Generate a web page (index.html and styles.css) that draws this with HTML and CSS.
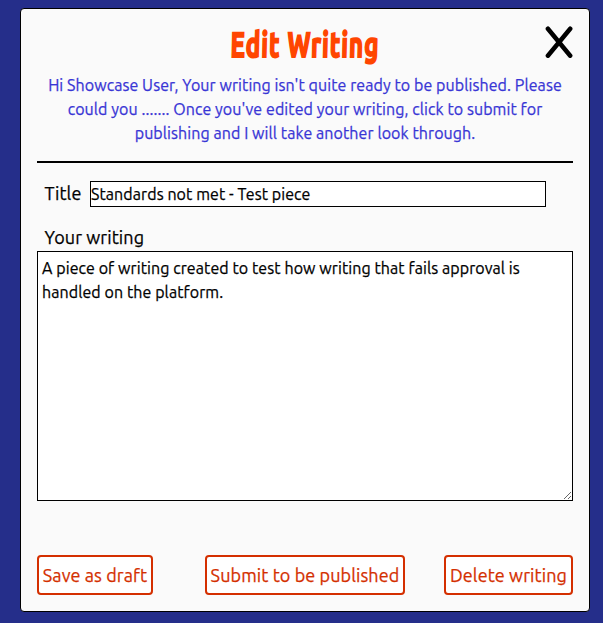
FILE: index.html
```html
<!DOCTYPE html>
<html lang="en">
<head>
<meta charset="utf-8">
<title>Edit Writing</title>
<link rel="stylesheet" href="styles.css">
</head>
<body>
<main class="dialog">
  <header class="header">
    <h1 class="heading"><span class="heading-text">Edit Writing</span></h1>
    <button type="button" class="close" aria-label="Close"><svg width="28" height="32" viewBox="0 0 28 32"><path d="M2.9 2.7 25.2 29.7M25.2 2.7 2.9 29.7"/></svg></button>
    <p class="message">Hi Showcase User, Your writing isn't quite ready to be published. Please<br>could you ....... Once you've edited your writing, click to submit for<br>publishing and I will take another look through.</p>
  </header>
  <form>
    <div class="title-row">
      <label class="label" for="title">Title</label>
      <input class="title-input" id="title" value="Standards not met - Test piece">
    </div>
    <label class="label writing-label" for="writing">Your writing</label>
    <textarea class="writing" id="writing" spellcheck="false">A piece of writing created to test how writing that fails approval is
handled on the platform.</textarea>
    <div class="actions">
      <button type="button" class="btn save">Save as draft</button>
      <button type="button" class="btn submit">Submit to be published</button>
      <button type="button" class="btn delete">Delete writing</button>
    </div>
  </form>
</main>
</body>
</html>
```
FILE: styles.css
```css
* { box-sizing: border-box; }
body {
  margin: 0;
  padding: 8px 13px 0 20px;
  height: 623px;
  overflow: hidden;
  background: #252e8a;
  font: 16px/24px Ubuntu, "Noto Sans", sans-serif;
  letter-spacing: .08px;
  color: #000;
  -webkit-text-stroke: .25px;
}
.dialog {
  width: 570px;
  height: 604px;
  padding: 16px;
  border: 1px solid #000;
  border-radius: 4px;
  background: #fafafa;
}
.header {
  position: relative;
  height: 138px;
  border-bottom: 2px solid #000;
  text-align: center;
}
.heading {
  margin: 0;
  height: 48px;
  font: 700 35px/39px Ubuntu, "Open Sans", sans-serif;
  letter-spacing: 1.6px;
  color: #ff4500;
  -webkit-text-stroke: 2px #ff4500;
}
.heading-text { display: inline-block; transform: scaleX(.69) skewX(-2deg); }
.close {
  position: absolute;
  top: 1px;
  right: 0;
  padding: 0;
  border: 0;
  background: none;
}
.close svg { display: block; fill: none; stroke: #000; stroke-width: 4.5; stroke-linecap: round; }
.message { margin: 0; color: #3835d5; white-space: nowrap; }
.title-row { display: flex; height: 26px; margin-top: 18px; }
.label { display: block; padding-left: 7.5px; font-size: 18px; }
.title-row .label { width: 53px; flex: none; }
.title-input {
  width: 456px;
  height: 26px;
  padding: 0;
  border: 1px solid #000;
  border-radius: 0;
  background: #fff;
  font: inherit;
  letter-spacing: inherit;
}
.writing-label { margin-top: 18px; height: 26px; line-height: 25px; }
.writing {
  display: block;
  width: 536px;
  height: 250px;
  padding: 4px;
  border: 1px solid #000;
  border-radius: 0;
  background: #fff;
  font: inherit;
  letter-spacing: inherit;
  resize: both;
}
.actions { display: flex; margin-top: 54px; }
.btn {
  height: 40px;
  padding: 0;
  border: 2px solid #d42f00;
  border-radius: 4px;
  background: #fff;
  color: #d42f00;
  font: 18px/24px Ubuntu, "Noto Sans", sans-serif;
  letter-spacing: .1px;
  white-space: nowrap;
}
.save { width: 116px; }
.submit { width: 200px; margin: 0 39px 0 52px; }
.delete { width: 129px; }
```
